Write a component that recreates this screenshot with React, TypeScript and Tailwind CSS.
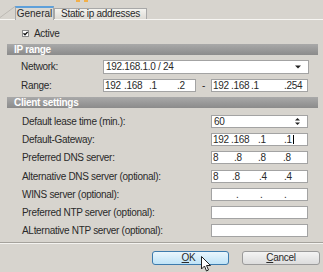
import React from "react";

type Seg = { t: string; w: string };

function IpText({ segs }: { segs: Seg[] }) {
  return (
    <div className="flex items-center h-full pl-[1px]">
      {segs.map((s, i) => (
        <span key={i} className={`inline-block whitespace-pre ${s.w}`}>
          {s.t}
        </span>
      ))}
    </div>
  );
}

function Field({ children, className = "" }: { children?: React.ReactNode; className?: string }) {
  return (
    <div className={`h-[13px] w-[97px] bg-white border border-[#a3a3a3] flex items-center ${className}`}>
      {children}
    </div>
  );
}

function Row({ label, children, className = "" }: { label: string; children?: React.ReactNode; className?: string }) {
  return (
    <div className={`flex items-center h-[13px] ${className}`}>
      <div className="w-[211px] pl-[22px] whitespace-nowrap">{label}</div>
      {children}
    </div>
  );
}

function Header({ title, className = "" }: { title: string; className?: string }) {
  return (
    <div
      className={`ml-[7px] mr-[5px] h-[11px] flex items-center pl-[7px] text-white font-bold bg-gradient-to-b from-[#a9a9a9] to-[#8b8b8b] ${className}`}
    >
      {title}
    </div>
  );
}

export default function App() {
  return (
    <div className="relative w-[323px] h-[272px] overflow-hidden bg-[#d7d4ce] text-[10px] tracking-[-0.3px] text-[#2a2a2a] font-['Liberation_Sans',Arial,sans-serif] leading-none">
      {/* decorations at top */}
      <svg className="absolute left-0 top-0" width="20" height="20">
        <line x1="0" y1="17.5" x2="15" y2="6.5" stroke="#bdbab4" strokeWidth="1" />
      </svg>
      <div className="absolute left-[76px] top-0 w-[4px] h-[2px] bg-[#f2b04a]" />
      <div className="absolute left-[84px] top-0 w-[4px] h-[2px] bg-[#f2b04a]" />

      {/* tabs */}
      <div className="flex items-end h-[13px] mt-[6px] pl-[15px] relative z-10">
        <div className="h-[14px] w-[39px] mb-[-1px] bg-[#dcd9d3] border-x border-[#a8a8a8] border-t-2 border-t-[#5ea0da] flex items-center justify-center tracking-normal">
          General
        </div>
        <div className="h-[11px] w-[93px] bg-gradient-to-b from-[#f4f3ef] to-[#dedbd5] border border-b-0 border-[#a8a8a8] flex items-center justify-center">
          Static ip addresses
        </div>
      </div>

      {/* panel */}
      <div className="border-t border-[#f7f6f3] flex flex-col">
        <div className="mt-[10px] h-[7px] flex items-center pl-[22px]">
          <div className="w-[7px] h-[7px] bg-white border border-[#8a8a8a] flex items-center justify-center">
            <svg width="5" height="5" viewBox="0 0 5 5">
              <path d="M0.5 2.3 L2 3.8 L4.6 1" stroke="#111" strokeWidth="1.3" fill="none" />
            </svg>
          </div>
          <span className="ml-[5px]">Active</span>
        </div>

        <Header title="IP range" className="mt-[7px]" />

        <div className="mt-[5px] flex items-center h-[14px]">
          <div className="w-[103px] pl-[21px]">Network:</div>
          <div className="h-[14px] w-[206px] bg-white border border-[#a3a3a3] flex items-center justify-between pl-[2px] pr-[7px]">
            <span>192.168.1.0 / 24</span>
            <svg width="6" height="4" viewBox="0 0 6 4">
              <path d="M0 0.5 L6 0.5 L3 3.5 Z" fill="#222" />
            </svg>
          </div>
        </div>

        <div className="mt-[5px] flex items-center h-[13px]">
          <div className="w-[103px] pl-[21px]">Range:</div>
          <div className="h-[13px] w-[93px] bg-white border border-[#a3a3a3]">
            <IpText
              segs={[
                { t: "192", w: "w-[19px]" },
                { t: ".168", w: "w-[25px]" },
                { t: ".1", w: "w-[28px]" },
                { t: ".2", w: "" },
              ]}
            />
          </div>
          <div className="w-[15px] text-center">-</div>
          <div className="h-[13px] w-[97px] bg-white border border-[#a3a3a3]">
            <IpText
              segs={[
                { t: "192", w: "w-[18px]" },
                { t: ".168", w: "w-[20px]" },
                { t: ".1", w: "w-[33px]" },
                { t: ".254", w: "" },
              ]}
            />
          </div>
        </div>

        <Header title="Client settings" className="mt-[5px]" />

        <div className="mt-[7px] flex flex-col">
          <Row label="Default lease time (min.):">
            <Field className="justify-between pl-[2px] pr-[7px]">
              <span>60</span>
              <svg width="5" height="9" viewBox="0 0 5 9">
                <path d="M0 3.5 L5 3.5 L2.5 1 Z" fill="#222" />
                <path d="M0 5.5 L5 5.5 L2.5 8 Z" fill="#222" />
              </svg>
            </Field>
          </Row>
          <Row label="Default-Gateway:" className="mt-[5px]">
            <Field>
              <IpText
                segs={[
                  { t: "192", w: "w-[18px]" },
                  { t: ".168", w: "w-[27px]" },
                  { t: ".1", w: "w-[26px]" },
                  { t: ".1", w: "" },
                ]}
              />
              <span className="ml-[1px] w-[1px] h-[9px] bg-black" />
            </Field>
          </Row>
          <Row label="Preferred DNS server:" className="mt-[5px]">
            <Field>
              <IpText
                segs={[
                  { t: "8", w: "w-[21px]" },
                  { t: ".8", w: "w-[24px]" },
                  { t: ".8", w: "w-[25px]" },
                  { t: ".8", w: "" },
                ]}
              />
            </Field>
          </Row>
          <Row label="Alternative DNS server (optional):" className="mt-[6px]">
            <Field>
              <IpText
                segs={[
                  { t: "8", w: "w-[19px]" },
                  { t: ".8", w: "w-[27px]" },
                  { t: ".4", w: "w-[25px]" },
                  { t: ".4", w: "" },
                ]}
              />
            </Field>
          </Row>
          <Row label="WINS server (optional):" className="mt-[5px]">
            <Field>
              <IpText
                segs={[
                  { t: "", w: "w-[23px]" },
                  { t: ".", w: "w-[24px]" },
                  { t: ".", w: "w-[24px]" },
                  { t: ".", w: "" },
                ]}
              />
            </Field>
          </Row>
          <Row label="Preferred NTP server (optional):" className="mt-[5px]">
            <Field />
          </Row>
          <Row label="ALternative NTP server (optional):" className="mt-[5px]">
            <Field />
          </Row>
        </div>

        <div className="mt-[5px] h-[2px] border-t border-[#a5a29c] border-b border-b-[#f4f3f0]" />

        <div className="mt-[7px] flex justify-end pr-[3px] gap-[13px]">
          <div className="relative h-[14px] w-[77px] rounded-[3px] border border-[#3d7bad] bg-gradient-to-b from-[#eaf6fd] to-[#bfe3f7] flex items-center justify-center">
            <span className="ml-[-4px]">
              <span className="underline">O</span>K
            </span>
          </div>
          <div className="h-[14px] w-[78px] rounded-[3px] border border-[#9a9a9a] bg-gradient-to-b from-[#f4f4f4] to-[#dcdcdc] flex items-center justify-center">
            <span>
              <span className="underline">C</span>ancel
            </span>
          </div>
        </div>
      </div>

      {/* mouse cursor */}
      <svg className="absolute left-[201px] top-[256px]" width="12" height="17" viewBox="0 0 12 17">
        <path d="M0.5 0.5 L0.5 13 L3.5 10 L5.5 15 L7.5 14 L5.5 9.5 L9.5 9.5 Z" fill="white" stroke="#222" strokeWidth="1" strokeLinejoin="round" />
      </svg>
    </div>
  );
}
